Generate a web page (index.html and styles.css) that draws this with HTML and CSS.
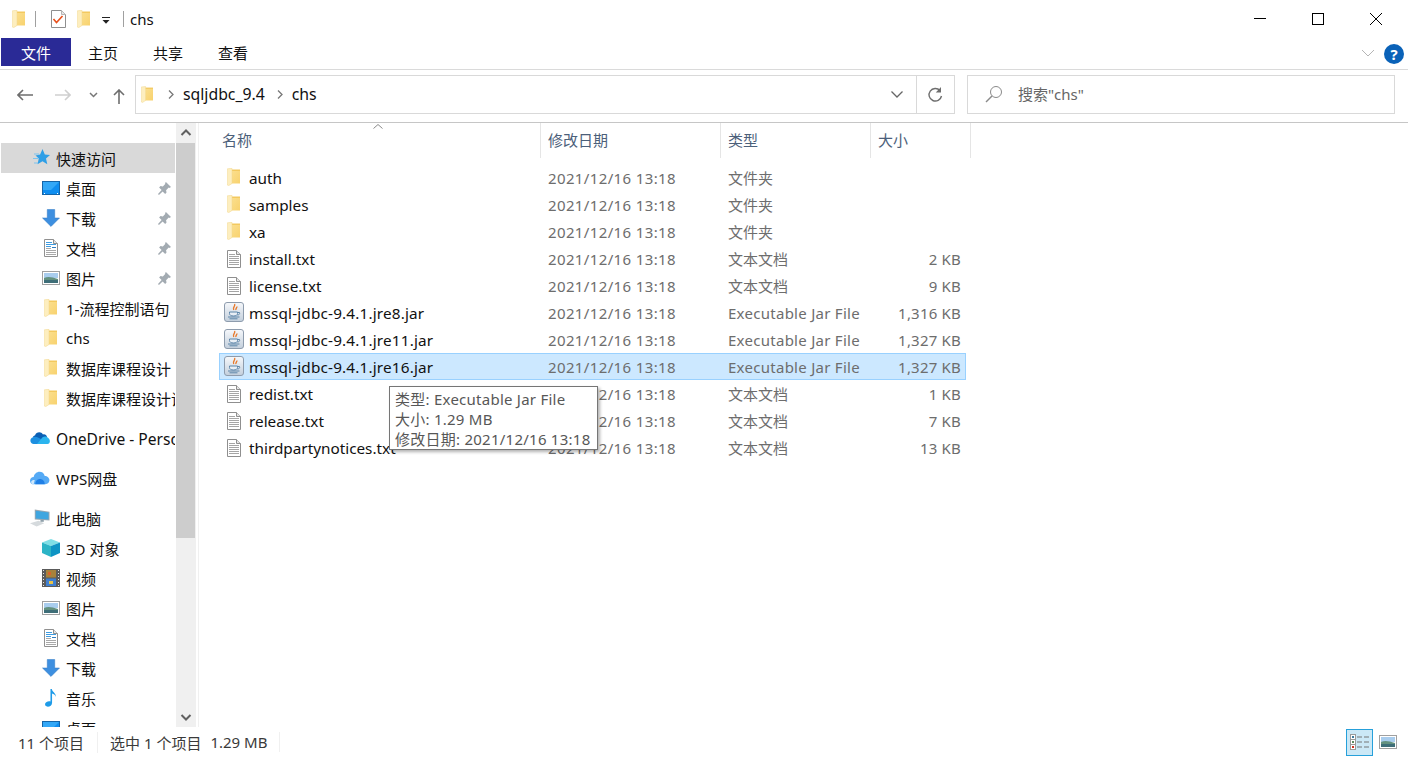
FILE: index.html
```html
<!DOCTYPE html>
<html lang="zh-CN">
<head>
    <meta charset="UTF-8">
    <meta name="viewport" content="width=device-width, initial-scale=1.0">
    <title>chs</title>
    <link rel="stylesheet" href="styles.css">
</head>
<body>
    <svg class="defs" width="0" height="0">
        <defs>
            <linearGradient id="g-folder" x1="0" y1="0" x2="1" y2="1">
                <stop offset="0" stop-color="#fbdf8e"/>
                <stop offset="1" stop-color="#f8d26e"/>
            </linearGradient>
            <linearGradient id="g-jar" x1="0" y1="0" x2="0" y2="1">
                <stop offset="0" stop-color="#f6f8fb"/>
                <stop offset="1" stop-color="#c3cfdc"/>
            </linearGradient>
        </defs>
        <symbol id="i-folder" viewBox="0 0 13 18">
            <path fill="#f3c95f" d="M4 1.500h9v1.500H4z"/>
            <path fill="url(#g-folder)" d="M4 3h9v12.500H4z"/>
            <path fill="#fdeebf" stroke="#f2d78e" stroke-width=".5" d="M.3 .8 5 .3v15.200l-3.400 2.200-1.300-.7z"/>
        </symbol>
        <symbol id="i-txt" viewBox="0 0 14 18">
            <path fill="#fff" stroke="#8f8f8f" d="M.5 .5h9l4 4v13H.5z"/>
            <path fill="#e6e6e6" stroke="#8f8f8f" d="M9.500 .5v4h4"/>
            <path stroke="#a5a5a5" d="M2 4.500h6M2 6.500h10M2 8.500h10M2 10.500h10M2 12.500h10M2 14.500h10"/>
        </symbol>
        <symbol id="i-doc" viewBox="0 0 14 18">
            <path fill="#fff" stroke="#909090" d="M.5 .5h9l4 4v13H.5z"/>
            <path fill="#e6e6e6" stroke="#909090" d="M9.500 .5v4h4"/>
            <path stroke="#3d9be0" d="M2 3.500h6M2 5.500h10M2 7.500h5"/>
            <path stroke="#2e7cc0" d="M8 8.500h4"/>
            <path stroke="#a8a8a8" d="M2 9.500h5M2 11.500h10M2 13.500h10M2 15.500h10"/>
        </symbol>
        <symbol id="i-jar" viewBox="0 0 20 20">
            <rect x=".5" y=".5" width="19" height="19" rx="2.500" fill="url(#g-jar)" stroke="#8e9cad"/>
            <path fill="none" stroke="#e8792b" stroke-width="1.400" d="M10.500 2c1.500 2-2.500 3.200-.8 6M12.800 4.500c.5 1.500-1.500 2-.8 3.500"/>
            <path fill="#e8eef5" stroke="#5d86aa" d="M5.500 10h8v1.500c0 1.500-1.500 2.500-4 2.500s-4-1-4-2.500z"/>
            <path fill="none" stroke="#5d86aa" d="M13.500 10.500h2c.6 1.500-.5 2.500-2.200 2.500M4 15h11.500M5.500 16.800h8"/>
        </symbol>
        <symbol id="i-star" viewBox="0 0 20 18">
            <path fill="#2f9fe6" d="M12.500 0l2.300 5.500 5.200.4-4 3.600 1.300 5.800-4.800-3-5 3 1.300-5.800-3.300-3 4.600-.9z"/>
            <path stroke="#7cc4ef" stroke-width="1.200" fill="none" d="M4 5h5M3 9.500h5M4 14h4"/>
        </symbol>
        <symbol id="i-desktop" viewBox="0 0 18 14">
            <rect x=".5" y=".5" width="17" height="13" fill="#0f8ef0" stroke="#1565a8"/>
            <path fill="#33a8f7" d="M1 1h16L9 9H1z"/>
            <path stroke="#fff" d="M2 12.500h1M15 12.500h1"/>
        </symbol>
        <symbol id="i-down" viewBox="0 0 17 17">
            <path fill="#3d8fe0" stroke="#2f78c4" stroke-width=".5" d="M5 .5h7v8h4.500L8.500 16.500.5 8.500H5z"/>
        </symbol>
        <symbol id="i-pic" viewBox="0 0 18 14">
            <rect x=".5" y=".5" width="17" height="13" fill="#fff" stroke="#a0a0a0"/>
            <path fill="#a9cdee" d="M2 2h14v5H2z"/>
            <path fill="#63917f" d="M2 7c4-2 8-1 14 1v2H2z"/>
            <path fill="#3e6e78" d="M2 9h14v3H2z"/>
        </symbol>
        <symbol id="i-pin" viewBox="0 0 14 14">
            <path fill="#a3abb2" d="M8.500 0l5.500 5.500-1.800 1-.7-.5-2.800 2.800.5 2.500-1.500 1.500-2.700-2.700L1 14l-1-1 3.900-4.500L1.200 5.800l1.500-1.500 2.500.5L8 2l-.5-.7z"/>
        </symbol>
        <symbol id="i-onedrive" viewBox="0 0 20 14">
            <path fill="#0a5fb4" d="M5 4.500C6 1 11 0 13 3.500 15 3 16.500 4 17 6L8 11 3 6c.500-1 1-1.500 2-1.500z"/>
            <path fill="#1d8fe0" d="M3.500 6C1 6.500 0 8.500 .5 10.500 1 12 2 13 3.500 13H9l4-4-5-2.500C6.500 5.500 5 5.500 3.500 6z"/>
            <path fill="#2bb4ee" d="M17 6c-2.500-1-4.500 0-5.500 1.500L7 13h10.500c3 0 3.500-5 -.5-7z"/>
        </symbol>
        <symbol id="i-wps" viewBox="0 0 19 13">
            <path fill="#55aaf5" d="M4 12.500C1.500 12.500 0 11 0 9s1.500-3.500 3.500-3.500C4 2.500 6.500 .5 9 .5c2.500 0 4.500 1.500 5 4 2.500 0 4.500 2 4.500 4s-1.500 4-4 4z"/>
            <path fill="#1f7fe6" d="M5 12.500c0-3 2-5 4.500-5s4.500 2 4.500 5z"/>
            <path fill="#d0e8fb" d="M1 10c1-1.500 2-2 3.500-1.500L3.500 12.500c-1.500 0-2.500-1-2.500-2.500z"/>
        </symbol>
        <symbol id="i-pc" viewBox="0 0 21 18">
            <path fill="#d5dadd" d="M0 14.500l9-2.500 6 2.500-8 3.500z"/>
            <path fill="#9aa7b0" d="M5 0l15.500 2.500v9L5 10.500z"/>
            <path fill="#3fa6e0" d="M6 1.300l13.500 2v7.200L6 9.500z"/>
            <path fill="#8fa0aa" d="M11 10.800h3.500v2.200H11z"/>
        </symbol>
        <symbol id="i-3d" viewBox="0 0 18 18">
            <path fill="#7fdfe6" d="M9 0l9 3.500L9 7 0 3.500z"/>
            <path fill="#2cb4c6" d="M0 3.500L9 7v11l-9-4z"/>
            <path fill="#0e94c4" d="M18 3.500L9 7v11l9-4z"/>
        </symbol>
        <symbol id="i-video" viewBox="0 0 18 18">
            <rect width="18" height="18" fill="#5a5a5a"/>
            <path stroke="#e6e6e6" stroke-dasharray="1 2" d="M1.500 1v16M16.500 1v16"/>
            <rect x="4" y="1" width="10" height="7.500" fill="#a8823a"/>
            <rect x="4" y="9.500" width="10" height="7.500" fill="#3f7fd0"/>
            <path fill="#d9622b" d="M6 3h3v3H6z"/>
            <path fill="#e7c34a" d="M7 12h4v3H7z"/>
        </symbol>
        <symbol id="i-music" viewBox="0 0 12 17">
            <path fill="#1e9be8" d="M5.500 0h1.300c.3 3 4 3.500 3.700 7.500-.6-2-2-3-3.500-3.300V13c0 2.500-2 3.700-4 3.700S0 15.500.5 13.800C1 12 3.500 11 5.500 11.700z"/>
        </symbol>
    </svg>

    <div class="window">
        <header class="titlebar">
            <svg class="qa-folder"><use href="#i-folder"/></svg>
            <span class="qa-sep"></span>
            <svg class="qa-check" viewBox="0 0 15 18">
                <path fill="#fff" stroke="#8f8f8f" d="M.5 .5h10l4 4v13H.5z"/>
                <path fill="#e6e6e6" stroke="#b5b5b5" d="M10.500 .5v4h4"/>
                <path fill="none" stroke="#e8501c" stroke-width="1.600" d="M2.500 9l3 3.500 6-6.500"/>
            </svg>
            <svg class="qa-folder second"><use href="#i-folder"/></svg>
            <svg class="qa-drop" viewBox="0 0 8 7">
                <path stroke="#222" d="M0 .5h8"/>
                <path fill="#222" d="M.5 3h7L4 6.800z"/>
            </svg>
            <span class="qa-sep last"></span>
            <span class="title-text">chs</span>
            <div class="winbtns">
                <svg class="winbtn" viewBox="0 0 58 38"><path stroke="#000" d="M23 18.500h12"/></svg>
                <svg class="winbtn" viewBox="0 0 58 38"><rect x="23.500" y="13.500" width="11" height="11" fill="none" stroke="#000"/></svg>
                <svg class="winbtn" viewBox="0 0 58 38"><path stroke="#000" fill="none" d="M23 13l12 12M35 13L23 25"/></svg>
            </div>
        </header>

        <nav class="ribbon">
            <span class="tab tab-file">文件</span>
            <span class="tab">主页</span>
            <span class="tab">共享</span>
            <span class="tab">查看</span>
            <svg class="ribbon-chev" viewBox="0 0 14 8"><path fill="none" stroke="#b5b5b5" d="M1 1l6 6 6-6"/></svg>
            <span class="help">?</span>
        </nav>

        <div class="addressrow">
            <svg class="navbtn back" viewBox="0 0 16 12"><path fill="none" stroke="#6e6e6e" stroke-width="1.600" d="M16 6H1M6 1L1 6l5 5"/></svg>
            <svg class="navbtn forward" viewBox="0 0 16 12"><path fill="none" stroke="#cfcfcf" stroke-width="1.600" d="M0 6h15M10 1l5 5-5 5"/></svg>
            <svg class="navbtn recent" viewBox="0 0 9 6"><path fill="none" stroke="#777" stroke-width="1.500" d="M1 1l3.500 3.500L8 1"/></svg>
            <svg class="navbtn up" viewBox="0 0 12 15"><path fill="none" stroke="#6e6e6e" stroke-width="1.600" d="M6 15V1M1 6l5-5 5 5"/></svg>
            <div class="addressbox">
                <svg class="addr-folder"><use href="#i-folder"/></svg>
                <svg class="crumb-sep" viewBox="0 0 6 9"><path fill="none" stroke="#777" stroke-width="1.300" d="M1 .5l4 4-4 4"/></svg>
                <span class="crumb">sqljdbc_9.4</span>
                <svg class="crumb-sep" viewBox="0 0 6 9"><path fill="none" stroke="#777" stroke-width="1.300" d="M1 .5l4 4-4 4"/></svg>
                <span class="crumb">chs</span>
                <svg class="addr-chev" viewBox="0 0 12 7"><path fill="none" stroke="#666" stroke-width="1.300" d="M.5 .5L6 6l5.500-5.500"/></svg>
                <span class="addr-sep"></span>
                <svg class="addr-refresh" viewBox="0 0 16 16"><path fill="none" stroke="#6e6e6e" stroke-width="1.400" d="M13 3.500A6.300 6.300 0 1 0 14.500 9"/><path fill="#6e6e6e" d="M14 0v5.500H8.800z"/></svg>
            </div>
            <div class="searchbox">
                <svg class="search-icon" viewBox="0 0 18 18"><circle cx="11" cy="7" r="5.500" fill="none" stroke="#8a8a8a"/><path stroke="#8a8a8a" stroke-width="1.400" d="M7 11l-6 6"/></svg>
                <span>搜索"chs"</span>
            </div>
        </div>

        <main class="content">
            <aside class="sidebar">
                <div class="navlist">
                    <div class="navitem top active"><svg class="ic"><use href="#i-star"/></svg><span>快速访问</span></div>
                    <div class="navitem"><svg class="ic"><use href="#i-desktop"/></svg><span>桌面</span><svg class="pin"><use href="#i-pin"/></svg></div>
                    <div class="navitem"><svg class="ic"><use href="#i-down"/></svg><span>下载</span><svg class="pin"><use href="#i-pin"/></svg></div>
                    <div class="navitem"><svg class="ic"><use href="#i-doc"/></svg><span>文档</span><svg class="pin"><use href="#i-pin"/></svg></div>
                    <div class="navitem"><svg class="ic"><use href="#i-pic"/></svg><span>图片</span><svg class="pin"><use href="#i-pin"/></svg></div>
                    <div class="navitem"><svg class="ic ic-folder"><use href="#i-folder"/></svg><span>1-流程控制语句</span></div>
                    <div class="navitem"><svg class="ic ic-folder"><use href="#i-folder"/></svg><span>chs</span></div>
                    <div class="navitem"><svg class="ic ic-folder"><use href="#i-folder"/></svg><span>数据库课程设计</span></div>
                    <div class="navitem"><svg class="ic ic-folder"><use href="#i-folder"/></svg><span>数据库课程设计说明书</span></div>
                    <div class="navitem top group"><svg class="ic"><use href="#i-onedrive"/></svg><span class="latin">OneDrive - Personal</span></div>
                    <div class="navitem top group"><svg class="ic"><use href="#i-wps"/></svg><span>WPS网盘</span></div>
                    <div class="navitem top group"><svg class="ic"><use href="#i-pc"/></svg><span>此电脑</span></div>
                    <div class="navitem"><svg class="ic"><use href="#i-3d"/></svg><span>3D 对象</span></div>
                    <div class="navitem"><svg class="ic"><use href="#i-video"/></svg><span>视频</span></div>
                    <div class="navitem"><svg class="ic"><use href="#i-pic"/></svg><span>图片</span></div>
                    <div class="navitem"><svg class="ic"><use href="#i-doc"/></svg><span>文档</span></div>
                    <div class="navitem"><svg class="ic"><use href="#i-down"/></svg><span>下载</span></div>
                    <div class="navitem"><svg class="ic"><use href="#i-music"/></svg><span>音乐</span></div>
                    <div class="navitem"><svg class="ic"><use href="#i-desktop"/></svg><span>桌面</span></div>
                </div>
                <div class="scrollbar">
                    <svg class="sb-btn" viewBox="0 0 20 20"><path fill="none" stroke="#606060" stroke-width="2" d="M5.500 12L10 7.500l4.500 4.500"/></svg>
                    <div class="sb-track"><div class="sb-thumb"></div></div>
                    <svg class="sb-btn" viewBox="0 0 20 20"><path fill="none" stroke="#606060" stroke-width="2" d="M5.500 8l4.500 4.500L14.500 8"/></svg>
                </div>
            </aside>

            <section class="files">
                <svg class="sort-caret" viewBox="0 0 10 5"><path fill="none" stroke="#8a8a8a" d="M.5 4.500L5 .5l4.500 4"/></svg>
                <div class="filehead">
                    <span>名称</span>
                    <span>修改日期</span>
                    <span>类型</span>
                    <span>大小</span>
                </div>
                <div class="filelist">
                    <div class="filerow"><span class="fname"><svg class="fic folder"><use href="#i-folder"/></svg>auth</span><span class="fdate">2021/12/16 13:18</span><span>文件夹</span><span class="fsize"></span></div>
                    <div class="filerow"><span class="fname"><svg class="fic folder"><use href="#i-folder"/></svg>samples</span><span class="fdate">2021/12/16 13:18</span><span>文件夹</span><span class="fsize"></span></div>
                    <div class="filerow"><span class="fname"><svg class="fic folder"><use href="#i-folder"/></svg>xa</span><span class="fdate">2021/12/16 13:18</span><span>文件夹</span><span class="fsize"></span></div>
                    <div class="filerow"><span class="fname"><svg class="fic txt"><use href="#i-txt"/></svg>install.txt</span><span class="fdate">2021/12/16 13:18</span><span>文本文档</span><span class="fsize">2 KB</span></div>
                    <div class="filerow"><span class="fname"><svg class="fic txt"><use href="#i-txt"/></svg>license.txt</span><span class="fdate">2021/12/16 13:18</span><span>文本文档</span><span class="fsize">9 KB</span></div>
                    <div class="filerow jarrow"><span class="fname"><svg class="fic jar"><use href="#i-jar"/></svg>mssql-jdbc-9.4.1.jre8.jar</span><span class="fdate">2021/12/16 13:18</span><span class="ftype">Executable Jar File</span><span class="fsize">1,316 KB</span></div>
                    <div class="filerow jarrow"><span class="fname"><svg class="fic jar"><use href="#i-jar"/></svg>mssql-jdbc-9.4.1.jre11.jar</span><span class="fdate">2021/12/16 13:18</span><span class="ftype">Executable Jar File</span><span class="fsize">1,327 KB</span></div>
                    <div class="filerow jarrow selected"><span class="fname"><svg class="fic jar"><use href="#i-jar"/></svg>mssql-jdbc-9.4.1.jre16.jar</span><span class="fdate">2021/12/16 13:18</span><span class="ftype">Executable Jar File</span><span class="fsize">1,327 KB</span></div>
                    <div class="filerow"><span class="fname"><svg class="fic txt"><use href="#i-txt"/></svg>redist.txt</span><span class="fdate">2021/12/16 13:18</span><span>文本文档</span><span class="fsize">1 KB</span></div>
                    <div class="filerow"><span class="fname"><svg class="fic txt"><use href="#i-txt"/></svg>release.txt</span><span class="fdate">2021/12/16 13:18</span><span>文本文档</span><span class="fsize">7 KB</span></div>
                    <div class="filerow"><span class="fname"><svg class="fic txt"><use href="#i-txt"/></svg>thirdpartynotices.txt</span><span class="fdate">2021/12/16 13:18</span><span>文本文档</span><span class="fsize">13 KB</span></div>
                </div>
                <div class="tooltip">
                    <div>类型: Executable Jar File</div>
                    <div>大小: 1.29 MB</div>
                    <div>修改日期: 2021/12/16 13:18</div>
                </div>
            </section>
        </main>

        <footer class="statusbar">
            <span class="st-count">11 个项目</span>
            <span class="st-sel">选中 1 个项目</span>
            <span class="st-size">1.29 MB</span>
            <div class="viewbtns">
                <span class="viewbtn on">
                    <svg viewBox="0 0 19 17" width="19" height="17">
                        <g fill="#fff" stroke="#9a9a9a"><rect x=".5" y=".5" width="5" height="5"/><rect x=".5" y="5.500" width="5" height="5"/><rect x=".5" y="10.500" width="5" height="5"/></g>
                        <path fill="#3d7a9c" d="M2 2h2v2H2z"/><path fill="#5f8a5f" d="M2 7h2v2H2z"/><path fill="#d03020" d="M2 12h2v2H2z"/>
                        <path stroke="#777" d="M7 3h5M14 3h5M7 8h5M14 8h5M7 13h5M14 13h5"/>
                    </svg>
                </span>
                <svg class="viewpic"><use href="#i-pic"/></svg>
            </div>
        </footer>
    </div>
</body>
</html>
```
FILE: styles.css
```css
html, body {
    margin: 0;
    padding: 0;
    background-color: #ffffff;
}
body {
    font-family: "Noto Sans", "Noto Sans CJK SC", sans-serif;
    font-size: 15px;
    color: #111111;
}
.defs {
    display: block;
}
.window {
    width: 1408px;
    height: 757px;
    display: flex;
    flex-direction: column;
    overflow: hidden;
}

/* title bar */
.titlebar {
    height: 38px;
    flex: none;
    display: flex;
    align-items: center;
    padding-left: 12px;
}
.qa-folder {
    width: 13px;
    height: 18px;
    flex: none;
}
.qa-folder.second {
    margin-left: 11px;
}
.qa-sep {
    width: 1px;
    height: 16px;
    background-color: #a0a0a0;
    margin-left: 10px;
    margin-right: 15px;
}
.qa-sep.last {
    margin-left: 13px;
    margin-right: 7px;
}
.qa-check {
    width: 15px;
    height: 18px;
}
.qa-drop {
    width: 8px;
    height: 7px;
    margin-left: 12px;
    margin-top: 2px;
}
.title-text {
    margin-left: -1px;
}
.winbtns {
    margin-left: auto;
    display: flex;
    padding-right: 3px;
}
.winbtn {
    width: 58px;
    height: 38px;
}

/* ribbon tabs */
.ribbon {
    height: 31px;
    flex: none;
    display: flex;
    align-items: flex-start;
    padding-left: 1px;
    border-bottom: 1px solid #dadada;
}
.tab {
    width: 65px;
    height: 28px;
    line-height: 30px;
    text-align: center;
}
.tab-file {
    width: 70px;
    margin-right: -0.5px;
    background-color: #2a2a96;
    color: #ffffff;
}
.ribbon-chev {
    width: 14px;
    height: 8px;
    margin-left: auto;
    margin-top: 11px;
}
.help {
    width: 20px;
    height: 20px;
    border-radius: 50%;
    margin: 6px 4px 0 9px;
    background-color: #0a62b8;
    color: #ffffff;
    font-weight: bold;
    line-height: 20px;
    text-align: center;
}

/* address row */
.addressrow {
    height: 53px;
    flex: none;
    display: flex;
    align-items: flex-start;
    padding-top: 5px;
    box-sizing: border-box;
    border-bottom: 1px solid #c6c6c6;
}
.navbtn {
    flex: none;
    margin-top: 14px;
}
.back {
    width: 16px;
    height: 12px;
    margin-left: 17px;
}
.forward {
    width: 16px;
    height: 12px;
    margin-left: 22px;
}
.recent {
    width: 9px;
    height: 6px;
    margin-left: 18px;
    margin-top: 17px;
}
.up {
    width: 12px;
    height: 15px;
    margin-left: 15px;
}
.addressbox {
    width: 820px;
    height: 39px;
    box-sizing: border-box;
    margin-left: 10px;
    border: 1px solid #d9d9d9;
    display: flex;
    align-items: center;
    padding-left: 5px;
}
.addr-folder {
    width: 12px;
    height: 17px;
    flex: none;
}
.crumb {
    font-size: 15.8px;
    margin-top: -2px;
}
.crumb-sep {
    width: 6px;
    height: 9px;
    flex: none;
    margin-left: 15px;
    margin-right: 9px;
}
.crumb + .crumb-sep {
    margin-left: 12px;
}
.addr-chev {
    width: 12px;
    height: 7px;
    margin-left: auto;
}
.addr-sep {
    width: 1px;
    height: 37px;
    background-color: #d9d9d9;
    margin-left: 13px;
}
.addr-refresh {
    width: 16px;
    height: 16px;
    margin-left: 10px;
    margin-right: 11px;
}
.searchbox {
    width: 428px;
    height: 39px;
    box-sizing: border-box;
    margin-left: 12px;
    border: 1px solid #d9d9d9;
    display: flex;
    align-items: center;
    padding-left: 17px;
    padding-bottom: 2px;
    color: #666666;
}
.search-icon {
    width: 18px;
    height: 18px;
    margin-right: 15px;
}

/* main area */
.content {
    flex: 1;
    min-height: 0;
    display: flex;
}
.sidebar {
    width: 198px;
    flex: none;
    display: flex;
}
.navlist {
    width: 174px;
    margin-left: 1px;
    margin-right: 1px;
    padding-top: 20px;
    overflow: hidden;
    flex: none;
}
.navitem {
    height: 30px;
    display: flex;
    align-items: center;
    padding-left: 41px;
    position: relative;
    white-space: nowrap;
    overflow: hidden;
}
.navitem.top {
    padding-left: 29px;
}
.navitem.group {
    margin-top: 10px;
}
.navitem.active {
    background-color: #d9d9d9;
}
.ic {
    width: 18px;
    height: 18px;
    flex: none;
    margin-right: 6px;
}
.ic-folder {
    width: 13px;
    margin-left: 2px;
    margin-right: 9px;
}
.navitem.top .ic {
    width: 20px;
}
.latin {
    font-size: 15.6px;
    padding-top: 1px;
}
.pin {
    position: absolute;
    right: 4px;
    top: 9px;
    width: 13px;
    height: 13px;
}
.scrollbar {
    width: 20px;
    flex: none;
    display: flex;
    flex-direction: column;
    background-color: #f0f0f0;
}
.sb-btn {
    width: 20px;
    height: 20px;
    flex: none;
}
.sb-track {
    flex: 1;
}
.sb-thumb {
    width: 19px;
    height: 395px;
    background-color: #cdcdcd;
}

/* file list */
.files {
    flex: 1;
    position: relative;
    border-left: 1px solid #f0f0f0;
    padding-left: 15px;
}
.sort-caret {
    position: absolute;
    left: 174px;
    top: 1px;
    width: 10px;
    height: 5px;
}
.filehead {
    display: grid;
    grid-template-columns: 327px 180px 150px 100px;
    height: 31px;
    width: 757px;
    color: #4c607a;
}
.filehead span {
    box-sizing: border-box;
    padding-left: 7px;
    line-height: 35px;
    border-right: 1px solid #e5e5e5;
}
.filehead span:first-child {
    padding-left: 8px;
}
.filelist {
    margin-top: 10px;
    margin-left: 5px;
    width: 747px;
}
.filerow {
    display: grid;
    grid-template-columns: 328px 180px 150px 83px;
    height: 27px;
    box-sizing: border-box;
    align-items: center;
    color: #6d6d6d;
    border: 1px solid transparent;
}
.filerow.selected {
    background-color: #cce8ff;
    border-color: #99d1ff;
}
.fname {
    display: flex;
    align-items: center;
    color: #111111;
    font-size: 15.3px;
    white-space: nowrap;
    position: relative;
    padding-left: 29px;
}
.jarrow .fname {
    letter-spacing: 0.17px;
}
.fdate {
    letter-spacing: 0.37px;
}
.jarrow .ftype {
    letter-spacing: 0.27px;
}
.fic {
    position: absolute;
    left: 7px;
    top: 50%;
}
.fic.folder {
    margin-top: -10px;
    width: 13px;
    height: 18px;
}
.fic.txt {
    margin-top: -9px;
    width: 14px;
    height: 18px;
}
.fic.jar {
    left: 4px;
    margin-top: -11px;
    width: 20px;
    height: 20px;
}
.fsize {
    text-align: right;
    letter-spacing: 0.2px;
}
.tooltip {
    position: absolute;
    left: 190px;
    top: 263px;
    width: 209px;
    height: 64px;
    box-sizing: border-box;
    border: 1px solid #767676;
    background-color: #ffffff;
    color: #575757;
    padding-left: 5px;
    padding-top: 2px;
    line-height: 20px;
    letter-spacing: 0.25px;
    box-shadow: 2px 2px 3px rgba(0, 0, 0, 0.3);
    white-space: nowrap;
}

/* status bar */
.statusbar {
    height: 30px;
    flex: none;
    display: flex;
    align-items: center;
    color: #3a3a3a;
}
.st-count {
    margin-left: 18px;
    width: 79px;
    border-right: 1px solid #f0f0f0;
}
.st-sel {
    margin-left: 12px;
}
.st-size {
    margin-left: 9px;
    padding-right: 12px;
    border-right: 1px solid #f0f0f0;
}
.viewbtns {
    margin-left: auto;
    display: flex;
    align-items: center;
    padding-right: 11px;
}
.viewbtn {
    width: 27px;
    height: 27px;
    box-sizing: border-box;
    display: flex;
    align-items: center;
    justify-content: center;
}
.viewbtn.on {
    background-color: #cbe8f6;
    border: 1px solid #26a0da;
}
.viewpic {
    width: 18px;
    height: 14px;
    margin-left: 6px;
}
```
